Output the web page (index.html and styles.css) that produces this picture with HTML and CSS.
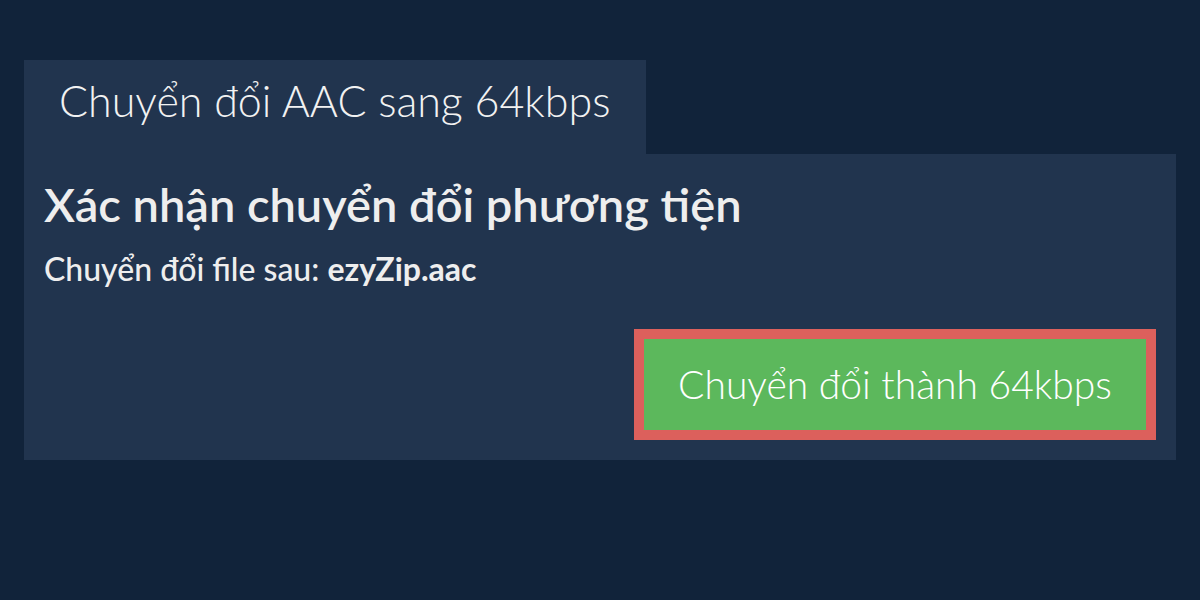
FILE: index.html
```html
<!DOCTYPE html>
<html lang="vi">
<head>
  <meta charset="UTF-8">
  <title>Chuyển đổi AAC sang 64kbps</title>
  <link rel="stylesheet" href="styles.css">
</head>
<body>
  <div class="wrap">
    <div class="tab">Chuyển đổi AAC sang 64kbps</div>
    <div class="panel">
      <h2>Xác nhận chuyển đổi phương tiện</h2>
      <p class="file">Chuyển đổi file sau: <strong>ezyZip.aac</strong></p>
      <div class="actions">
        <button class="convert">Chuyển đổi thành 64kbps</button>
      </div>
    </div>
  </div>
</body>
</html>
```

FILE: styles.css
```css
body {
  font-family: Lato, 'Open Sans', sans-serif;
  background-color: #11233a;
  margin: 0;
  color: #eeeeee;
}

.wrap {
  padding: 60px 24px;
}

.tab {
  display: inline-block;
  background: #21344e;
  height: 94px;
  line-height: 81px;
  padding: 0 35px;
  font-size: 43px;
  font-weight: 300;
  color: #f2f2f2;
}

.panel {
  background: #21344e;
  padding: 22px 20px 20px;
}

h2 {
  margin: 0;
  font-size: 47px;
  font-weight: 600;
  line-height: 1.2;
}

.file {
  margin: 18px 0 0;
  font-size: 32px;
  font-weight: 500;
  line-height: 1.2;
}

.file strong {
  font-weight: 700;
}

.actions {
  display: flex;
  justify-content: flex-end;
  margin-top: 40px;
}

.convert {
  font-family: Lato, 'Open Sans', sans-serif;
  background-color: #5cb85c;
  color: white;
  border: 10px solid #dc605c;
  width: 522px;
  height: 111px;
  font-size: 39px;
  font-weight: 300;
  cursor: pointer;
}
```
